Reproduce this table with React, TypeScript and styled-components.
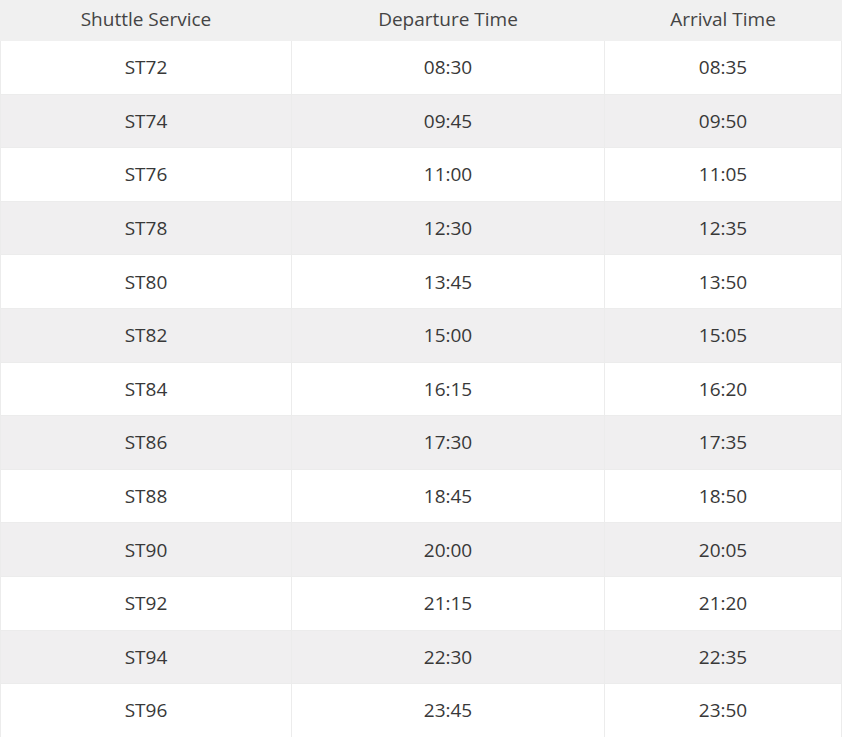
import React from "react";
import styled, { createGlobalStyle } from "styled-components";

const Global = createGlobalStyle`
  html, body { margin: 0; padding: 0; background: #ffffff; }
  body { font-family: "Open Sans", Lato, sans-serif; }
`;

const Table = styled.table`
  width: 841px;
  border-collapse: collapse;
  table-layout: fixed;
  font-family: "Open Sans", Lato, sans-serif;
  color: #383838;
`;

const HeadRow = styled.tr`
  height: 40px;
  background: #f0f0f0;
`;

const HeadCell = styled.th`
  padding: 0 0 3px;
  font-weight: 400;
  font-size: 19px;
  color: #444444;
  text-align: center;
  vertical-align: middle;
  border: 1px solid #f0f0f0;
`;

const Row = styled.tr<{ $odd: boolean }>`
  height: 53.6px;
  background: ${(p) => (p.$odd ? "#f0eff0" : "#ffffff")};
`;

const Cell = styled.td`
  padding: 0;
  font-size: 19px;
  text-align: center;
  vertical-align: middle;
  border: 1px solid #ececec;
`;

const rows = [
  ["ST72", "08:30", "08:35"],
  ["ST74", "09:45", "09:50"],
  ["ST76", "11:00", "11:05"],
  ["ST78", "12:30", "12:35"],
  ["ST80", "13:45", "13:50"],
  ["ST82", "15:00", "15:05"],
  ["ST84", "16:15", "16:20"],
  ["ST86", "17:30", "17:35"],
  ["ST88", "18:45", "18:50"],
  ["ST90", "20:00", "20:05"],
  ["ST92", "21:15", "21:20"],
  ["ST94", "22:30", "22:35"],
  ["ST96", "23:45", "23:50"],
];

export default function App() {
  return (
    <>
      <Global />
      <Table>
        <colgroup>
          <col style={{ width: 291 }} />
          <col style={{ width: 313 }} />
          <col style={{ width: 237 }} />
        </colgroup>
        <thead>
          <HeadRow>
            <HeadCell>Shuttle Service</HeadCell>
            <HeadCell>Departure Time</HeadCell>
            <HeadCell>Arrival Time</HeadCell>
          </HeadRow>
        </thead>
        <tbody>
          {rows.map((r, i) => (
            <Row key={r[0]} $odd={i % 2 === 1}>
              {r.map((c, j) => (
                <Cell key={j}>{c}</Cell>
              ))}
            </Row>
          ))}
        </tbody>
      </Table>
    </>
  );
}
